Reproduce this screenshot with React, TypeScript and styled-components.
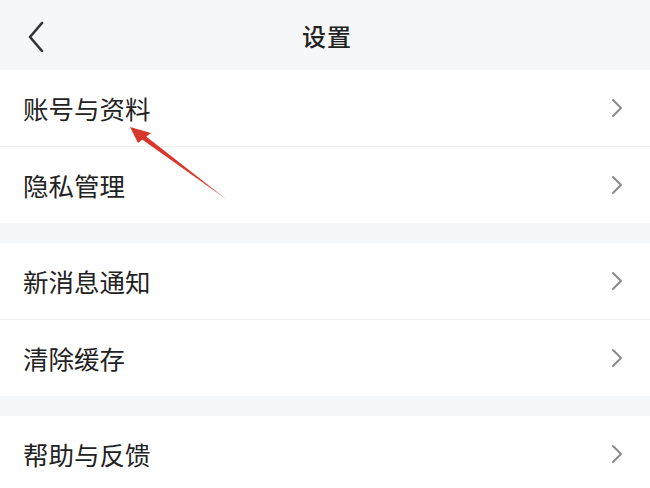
import * as React from 'react'
import styled, { createGlobalStyle } from 'styled-components'

const Global = createGlobalStyle`
    html, body {
        margin: 0;
        padding: 0;
        background: #f6f7f9;
    }
    body {
        font-family: "Noto Sans CJK SC", "Noto Sans", sans-serif;
        color: #222;
    }
`

const Page = styled.div`
    position: relative;
    width: 650px;
    height: 488px;
    overflow: hidden;
    background: #f6f7f9;
`

const Header = styled.div`
    height: 70px;
    display: flex;
    align-items: center;
    justify-content: center;
    position: relative;
    background: #f6f7f9;
`

const BackButton = styled.div`
    position: absolute;
    left: 26px;
    top: 20px;
    width: 24px;
    height: 32px;
    display: flex;
    align-items: center;
`

const Title = styled.div`
    font-size: 24px;
    font-weight: 500;
    color: #222;
    letter-spacing: 1px;
    margin-left: 4px;
`

const Section = styled.div<{$gap?: boolean}>`
    background: #fff;
    margin-top: ${p => p.$gap ? '20px' : '0'};
`

const Row = styled.div<{$divider?: boolean}>`
    height: 76px;
    display: flex;
    align-items: center;
    justify-content: space-between;
    padding: 0 26px 0 23px;
    border-bottom: ${p => p.$divider ? '1px solid #efefef' : 'none'};
`

const Label = styled.span`
    font-size: 25.5px;
    color: #222;
    line-height: 1;
`

const Arrow = styled.svg`
    position: absolute;
    left: 0;
    top: 0;
    pointer-events: none;
`

const Chevron = () => (
    <svg width="14" height="20" viewBox="0 0 14 20">
        <path d="M3 2 L11 10 L3 18" fill="none" stroke="#8a8a8a" strokeWidth="2" strokeLinecap="round" strokeLinejoin="round" />
    </svg>
)

// rows of settings, grouped in sections
const sections = [
    ['账号与资料', '隐私管理'],
    ['新消息通知', '清除缓存'],
    ['帮助与反馈'],
]

export default function App() {
    return (
        <>
            <Global />
            <Page>
                <Header>
                    <BackButton>
                        <svg width="20" height="32" viewBox="0 0 20 32">
                            <path d="M16 3 L4 17 L16 31" fill="none" stroke="#333" strokeWidth="2.6" strokeLinecap="round" strokeLinejoin="round" />
                        </svg>
                    </BackButton>
                    <Title>设置</Title>
                </Header>

                {sections.map((items, i) => (
                    <Section key={i} $gap={i > 0}>
                        {items.map((name, j) => (
                            <Row key={name} $divider={j < items.length - 1}>
                                <Label>{name}</Label>
                                <Chevron />
                            </Row>
                        ))}
                    </Section>
                ))}

                <Arrow width="650" height="488" viewBox="0 0 650 488">
                    <path d="M226 199 L140 138 L143 134 Z" fill="#d8382c" />
                    <path d="M130 127 L151 133 L138 143 Z" fill="#d8382c" />
                </Arrow>
            </Page>
        </>
    )
}
